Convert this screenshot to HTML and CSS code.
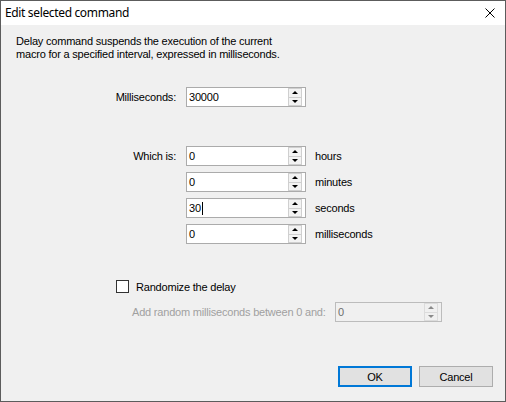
FILE: index.html
```html
<!DOCTYPE html>
<html lang="en">
<head>
  <meta charset="UTF-8" />
  <title>Edit selected command</title>
  <link rel="stylesheet" href="styles.css">
</head>
<body>
  <div class="window">
    <div class="titlebar">
      <span class="title">Edit selected command</span>
      <svg class="close" width="10" height="10" viewBox="0 0 10 10">
        <path d="M0.5 0.5 L9.5 9.5 M9.5 0.5 L0.5 9.5" stroke="#000" stroke-width="1" fill="none"/>
      </svg>
    </div>

    <div class="content">
      <p class="intro">Delay command suspends the execution of the current<br />macro for a specified interval, expressed in milliseconds.</p>

      <div class="grid total">
        <label>Milliseconds:</label>
        <div class="spin">
          <span class="val">30000</span>
          <div class="arrows"><span class="up"></span><span class="down"></span></div>
        </div>
        <span></span>
      </div>

      <div class="grid parts">
        <label>Which is:</label>
        <div class="spin">
          <span class="val">0</span>
          <div class="arrows"><span class="up"></span><span class="down"></span></div>
        </div>
        <span class="unit">hours</span>

        <span></span>
        <div class="spin">
          <span class="val">0</span>
          <div class="arrows"><span class="up"></span><span class="down"></span></div>
        </div>
        <span class="unit">minutes</span>

        <span></span>
        <div class="spin">
          <span class="val">30<i class="caret"></i></span>
          <div class="arrows"><span class="up"></span><span class="down"></span></div>
        </div>
        <span class="unit">seconds</span>

        <span></span>
        <div class="spin">
          <span class="val">0</span>
          <div class="arrows"><span class="up"></span><span class="down"></span></div>
        </div>
        <span class="unit">milliseconds</span>
      </div>

      <div class="check-row">
        <span class="checkbox"></span>
        <span>Randomize the delay</span>
      </div>

      <div class="random-row">
        <span class="random-label">Add random milliseconds between 0 and:</span>
        <div class="spin disabled">
          <span class="val">0</span>
          <div class="arrows"><span class="up"></span><span class="down"></span></div>
        </div>
      </div>

      <div class="buttons">
        <button class="btn default">OK</button>
        <button class="btn">Cancel</button>
      </div>
    </div>
  </div>
</body>
</html>
```

FILE: styles.css
```css
body {
  margin: 0;
  font-family: 'Liberation Sans', Arial, sans-serif;
  font-size: 11px;
  letter-spacing: -0.2px;
  color: #000;
}

.window {
  width: 506px;
  height: 402px;
  box-sizing: border-box;
  border: 1px solid #5c5c5c;
  background: #f0f0f0;
  display: flex;
  flex-direction: column;
}

.titlebar {
  height: 24px;
  background: #fff;
  display: flex;
  align-items: center;
  justify-content: space-between;
  padding: 0 10px 0 4px;
}

.title {
  font-family: 'Noto Sans', sans-serif;
  font-size: 12px;
  letter-spacing: -0.35px;
  margin-top: -1px;
}

.close {
  display: block;
}

.content {
  flex: 1;
  display: flex;
  flex-direction: column;
  padding: 0 12px 14px 15px;
}

.intro {
  margin: 10px 0 0;
  line-height: 13px;
}

.grid {
  display: grid;
  grid-template-columns: 161px 120px auto;
  column-gap: 9px;
  align-items: center;
}

.grid label {
  text-align: right;
  padding-right: 1px;
}

.total {
  margin-top: 26px;
}

.parts {
  margin-top: 39px;
  row-gap: 6px;
}

.spin {
  height: 20px;
  box-sizing: border-box;
  border: 1px solid #ababab;
  background: #fff;
  display: flex;
  align-items: center;
}

.val {
  flex: 1;
  padding-left: 2px;
  display: flex;
  align-items: center;
}

.caret {
  display: inline-block;
  width: 1px;
  height: 13px;
  background: #000;
  margin-left: 1px;
}

.arrows {
  width: 14px;
  align-self: stretch;
  margin: 0 3px 0 0;
  display: flex;
  flex-direction: column;
}

.arrows span {
  flex: 1;
  background: #f3f3f3;
  border: 1px solid #cfcfcf;
  display: flex;
  align-items: center;
  justify-content: center;
}

.arrows span + span {
  border-top: none;
}

.arrows span::after {
  content: "";
  width: 0;
  height: 0;
  border-left: 3px solid transparent;
  border-right: 3px solid transparent;
}

.up::after {
  border-bottom: 3px solid #000;
}

.down::after {
  border-top: 3px solid #000;
}

.check-row {
  margin-top: 36px;
  margin-left: 100px;
  display: flex;
  align-items: center;
  gap: 7px;
  height: 13px;
}

.checkbox {
  width: 13px;
  height: 13px;
  box-sizing: border-box;
  border: 1px solid #333;
  background: #fff;
}

.random-row {
  margin-top: 9px;
  margin-left: 116px;
  display: flex;
  align-items: center;
}

.random-label {
  width: 203px;
  color: #a0a0a0;
}

.spin.disabled {
  width: 107px;
  background: #f0f0f0;
  border-color: #bcbcbc;
  color: #6d6d6d;
}

.spin.disabled .arrows span {
  background: #f0f0f0;
  border-color: #dcdcdc;
}

.spin.disabled .up::after {
  border-bottom-color: #8a8a8a;
}

.spin.disabled .down::after {
  border-top-color: #8a8a8a;
}

.buttons {
  margin-top: auto;
  display: flex;
  justify-content: flex-end;
  gap: 7px;
}

.btn {
  width: 74px;
  height: 21px;
  box-sizing: border-box;
  font-family: 'Liberation Sans', Arial, sans-serif;
  font-size: 11px;
  letter-spacing: -0.2px;
  color: #000;
  background: #e1e1e1;
  border: 1px solid #adadad;
  padding: 0;
}

.btn.default {
  border: 2px solid #0078d7;
}
```
